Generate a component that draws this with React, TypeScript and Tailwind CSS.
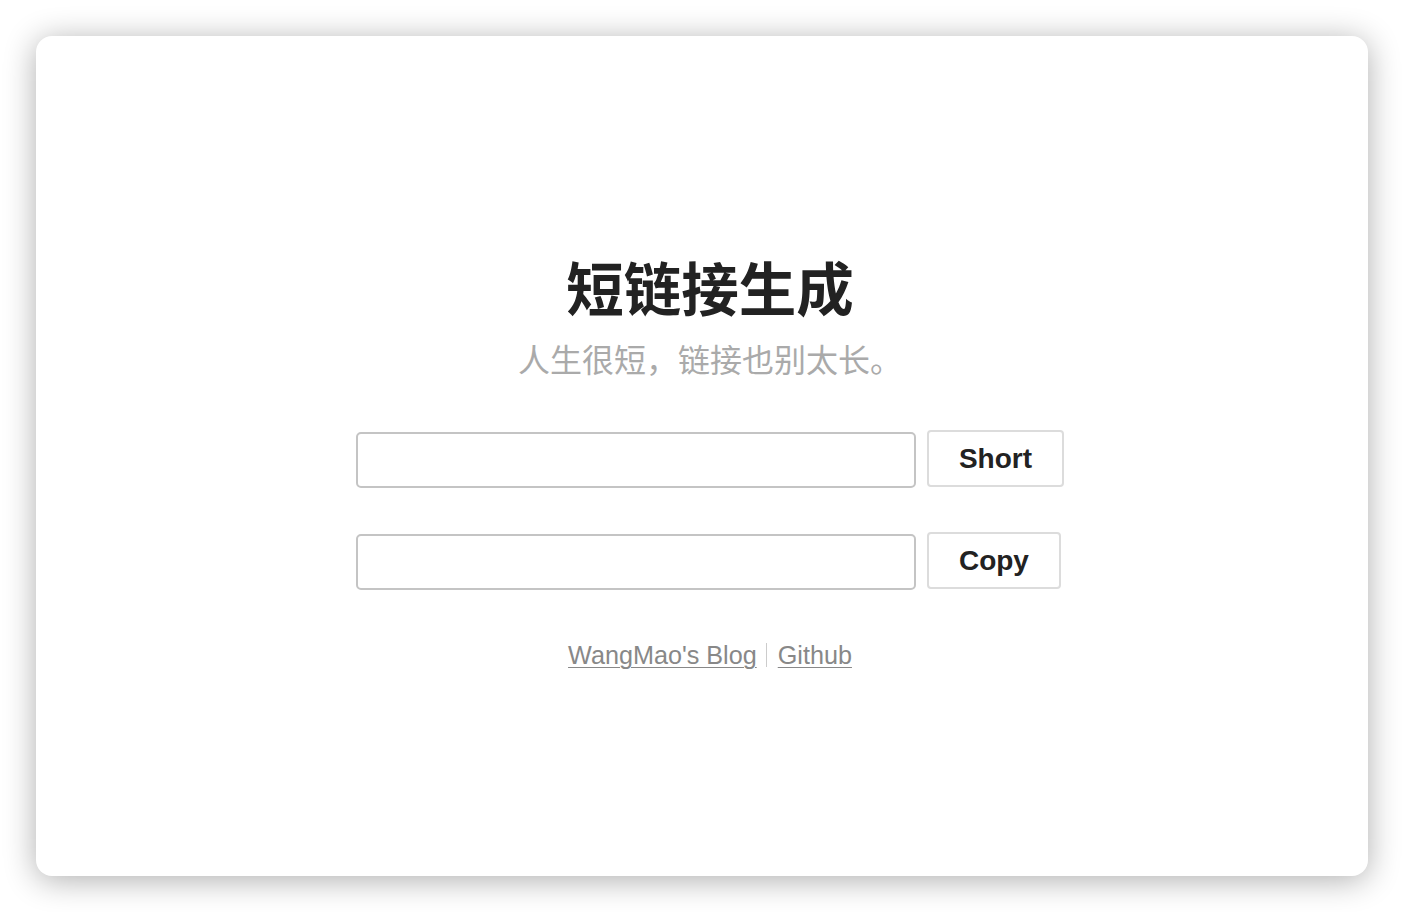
import React from 'react';

const App: React.FC = () => {
  return (
    <div className="min-h-screen bg-white p-[36px] font-['Liberation_Sans','Noto_Sans_CJK_SC',sans-serif]">
      {/* Window card */}
      <div className="h-[840px] rounded-[16px] bg-white shadow-[0_4px_32px_rgba(0,0,0,0.32)] flex flex-col items-center pt-[216px] pl-[16px]">
        <h1 className="text-[57.5px] leading-[68px] font-bold text-[#222] font-['Noto_Sans_CJK_SC',sans-serif]">
          短链接生成
        </h1>
        <p className="mt-[18px] text-[32px] leading-[40px] text-[#aaa] font-['Noto_Sans_CJK_SC',sans-serif]">
          人生很短，链接也别太长。
        </p>

        <div className="mt-[52px] flex flex-col gap-[44px]">
          <UrlRow label="Short" />
          <UrlRow label="Copy" />
        </div>

        <div className="mt-[50px] flex items-center text-[25.2px] leading-[30px] text-[#888]">
          <a href="#" className="underline underline-offset-[3px] decoration-1">WangMao's Blog</a>
          <span className="ml-[9px] mr-[11px] inline-block w-[1px] h-[24px] bg-[#ccc]"></span>
          <a href="#" className="underline underline-offset-[3px] decoration-1">Github</a>
        </div>
      </div>
    </div>
  );
};

interface UrlRowProps {
  label: string;
}

const UrlRow: React.FC<UrlRowProps> = ({ label }) => {
  return (
    <div className="flex items-start">
      <input
        type="text"
        className="mt-[2px] w-[560px] h-[56px] rounded-[5px] border-2 border-[#c4c4c4] bg-white px-3 text-[20px] outline-none"
      />
      <button className="ml-[11px] h-[57px] rounded-[4px] border-2 border-[#dcdcdc] bg-white px-[30px] text-[28px] font-bold text-[#222]">
        {label}
      </button>
    </div>
  );
};

export default App;
